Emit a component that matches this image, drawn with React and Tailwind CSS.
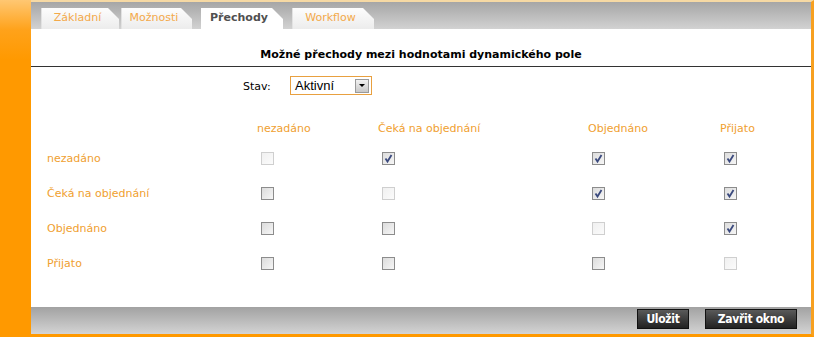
import React from "react";

const tabs = [
  { label: "Základní", w: "w-[78px]", ml: "ml-[10px]" },
  { label: "Možnosti", w: "w-[71px]", ml: "ml-[2px]" },
  { label: "Přechody", w: "w-[82px]", ml: "ml-[9px]", active: true },
  { label: "Workflow", w: "w-[82px]", ml: "ml-[9px]" },
];

const states = ["nezadáno", "Čeká na objednání", "Objednáno", "Přijato"];

// matrix[row][col]: true = checked, null = self (disabled)
const matrix = [
  [null, true, true, true],
  [false, null, true, true],
  [false, false, null, true],
  [false, false, false, null],
];

const Checkbox = ({ checked, disabled }) => {
  if (disabled) {
    return (
      <span className="block w-[13px] h-[13px] border border-[#cfcfcf] bg-gradient-to-br from-[#f0f0f0] to-[#fbfbfb]" />
    );
  }
  return (
    <span className="relative block w-[13px] h-[13px] border border-[#8c8c8c] bg-gradient-to-br from-[#dcdcdc] to-[#f6f6f6]">
      {checked && (
        <svg viewBox="0 0 11 11" className="absolute left-0 top-0 w-[11px] h-[11px]">
          <path
            d="M2.5 5.5 L4.5 8.5 L8.5 2"
            fill="none"
            stroke="#3b4a7e"
            strokeWidth="1.8"
          />
        </svg>
      )}
    </span>
  );
};

const Tab = ({ tab }) => (
  <div
    className={`${tab.ml} ${tab.w} h-[21px] flex items-center justify-center pr-[6px] text-[11px] [clip-path:polygon(0_0,calc(100%-11px)_0,100%_11px,100%_100%,0_100%)] ${
      tab.active
        ? "bg-white text-[#505050] font-bold"
        : "bg-gradient-to-b from-[#fdfdfd] to-[#ececec] text-[#f3a94a] border-l border-[#e2e2e2]"
    }`}
  >
    {tab.label}
  </div>
);

const App = () => {
  return (
    <div className="w-[814px] h-[337px] flex bg-white font-['DejaVu_Sans',Verdana,sans-serif] overflow-hidden">
      <div className="w-[31px] h-full bg-[linear-gradient(to_bottom,#ffc772_0px,#ffa21a_30px,#ff9900_60px)]" />

      <div className="flex-1 flex flex-col border-t-2 border-t-[#f6d9a4] border-r-[3px] border-r-[#f7a020] border-b-[3px] border-b-[#ff9900]">
        {/* tab strip */}
        <div className="h-[27px] flex items-end bg-gradient-to-b from-[#a6a6a6] to-[#d2d2d2]">
          {tabs.map((t) => (
            <Tab key={t.label} tab={t} />
          ))}
        </div>

        {/* content */}
        <div className="flex-1 flex flex-col">
          <div className="pt-[19px] pb-[4px] text-center text-[11px] leading-[14px] font-bold text-black border-b border-[#333]">
            Možné přechody mezi hodnotami dynamického pole
          </div>

          <div className="mt-[9px] flex items-center h-[19px] pl-[212px] text-[11px] text-black">
            <span className="w-[47px] pt-[4px]">Stav:</span>
            <div className="w-[82px] h-[19px] border border-[#e8a040] flex items-center justify-between pl-[4px] pr-[2px] font-['Liberation_Sans',Arial,sans-serif] text-[13px]">
              <span>Aktivní</span>
              <span className="w-[14px] h-[14px] border border-[#9a9a9a] bg-gradient-to-b from-[#f2f2f2] to-[#c8c8c8] flex items-center justify-center">
                <span className="w-0 h-0 border-l-[3px] border-r-[3px] border-t-[3px] border-l-transparent border-r-transparent border-t-black" />
              </span>
            </div>
          </div>

          <div className="mt-[22px] pl-[16px] grid grid-cols-[210px_121px_210px_132px_1fr] text-[11px] text-[#f0a030]">
            <div className="h-[24px]" />
            {states.map((s) => (
              <div key={s} className="h-[24px] flex items-center">
                {s}
              </div>
            ))}
            {states.map((row, r) => (
              <React.Fragment key={row}>
                <div className="h-[35px] flex items-center pt-[2px]">{row}</div>
                {matrix[r].map((v, c) => (
                  <div key={c} className="h-[35px] flex items-center pl-[4px]">
                    <Checkbox checked={v === true} disabled={v === null} />
                  </div>
                ))}
              </React.Fragment>
            ))}
          </div>
        </div>

        {/* footer */}
        <div className="h-[27px] flex items-start justify-end gap-[16px] pr-[14px] pt-[2px] bg-gradient-to-b from-[#a2a2a2] to-[#d4d4d4]">
          <button className="w-[52px] h-[20px] bg-gradient-to-b from-[#5a5a5a] to-[#222] border border-[#111] text-white text-[12px] font-bold font-['Liberation_Sans_Narrow','DejaVu_Sans_Condensed',sans-serif] tracking-[-0.3px]">
            Uložit
          </button>
          <button className="w-[92px] h-[20px] bg-gradient-to-b from-[#5a5a5a] to-[#222] border border-[#111] text-white text-[12px] font-bold font-['Liberation_Sans_Narrow','DejaVu_Sans_Condensed',sans-serif] tracking-[-0.3px]">
            Zavřit okno
          </button>
        </div>
      </div>
    </div>
  );
};

export default App;
